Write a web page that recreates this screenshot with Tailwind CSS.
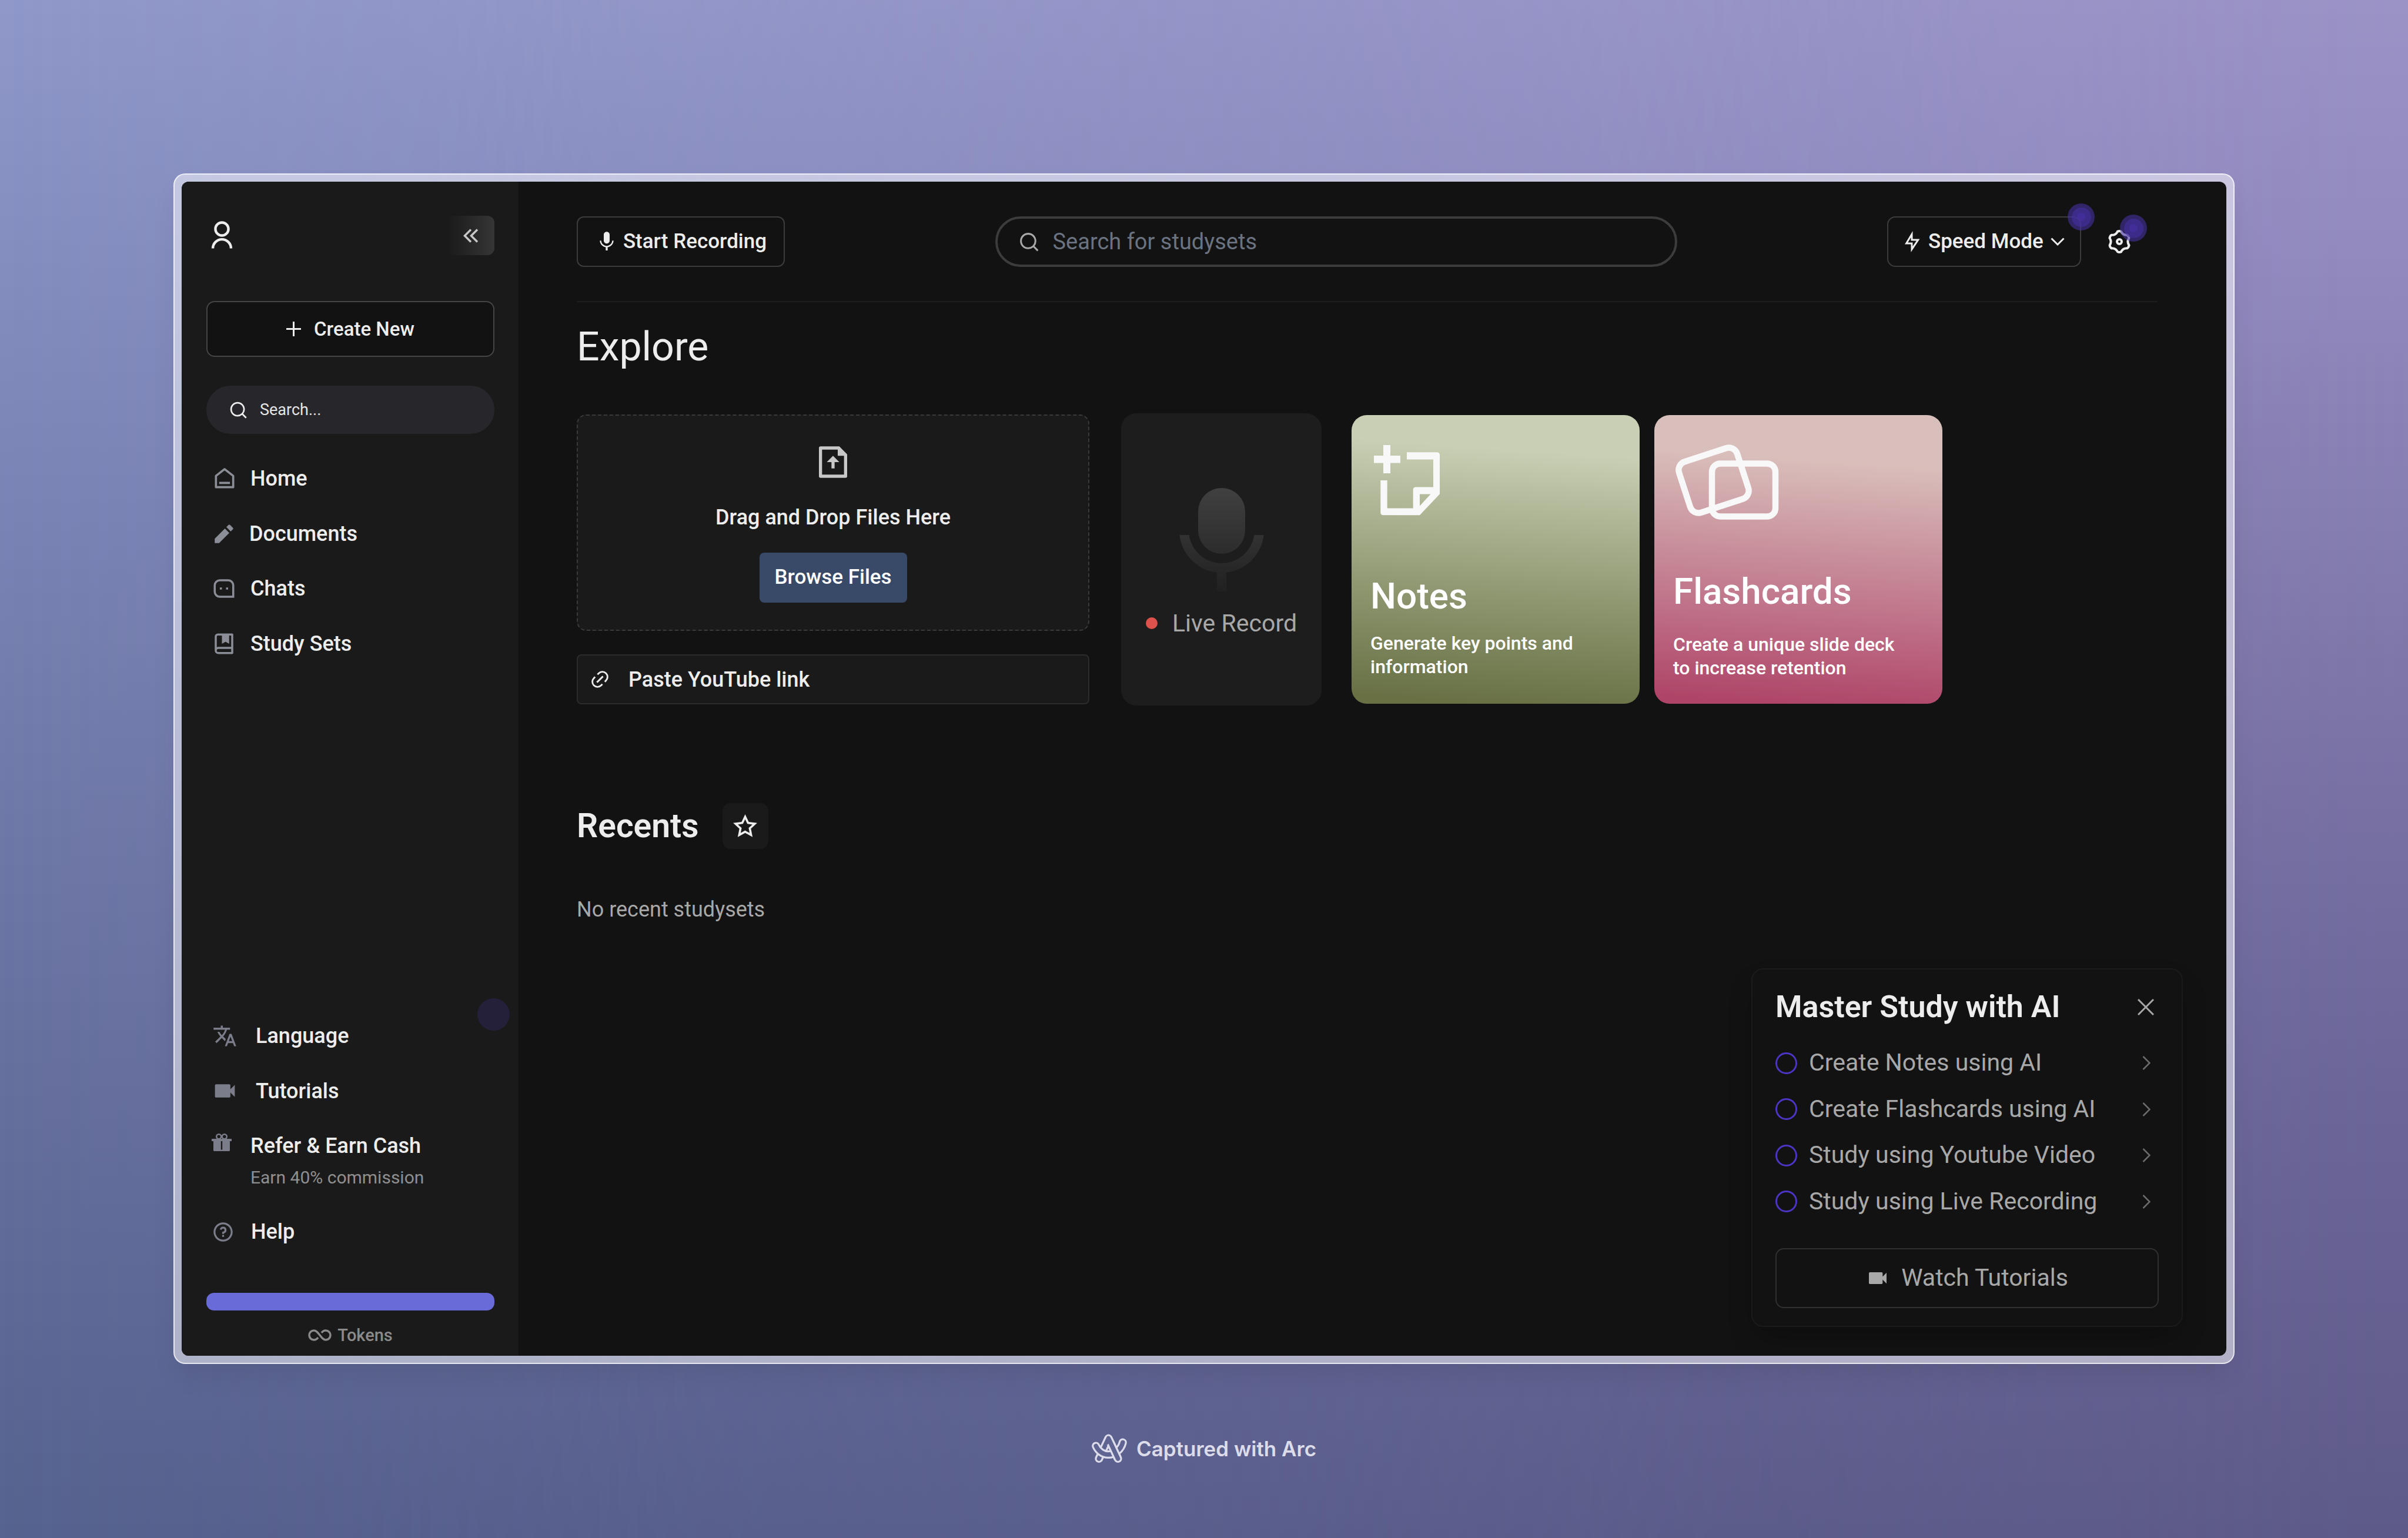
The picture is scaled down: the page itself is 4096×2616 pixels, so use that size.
<!DOCTYPE html>
<html lang="en">
<head>
<meta charset="utf-8">
<meta name="viewport" content="width=device-width, initial-scale=1">
<title>Explore</title>
<script src="https://cdn.jsdelivr.net/npm/@tailwindcss/browser@4"></script>
</head>
<body class="relative isolate flex min-h-screen flex-col bg-linear-[180deg,#8f98c9_0%,#7b86b7_30%,#67719f_68%,#56628f_100%] font-['Roboto',sans-serif] text-[#ededed]">
  <div class="absolute inset-0 -z-10 bg-linear-[180deg,#9b92c6_0%,#938abf_16%,#8077a9_42%,#6f699c_65%,#5e5a88_100%] [mask-image:linear-gradient(to_right,transparent,black)]"></div>

  <div class="flex flex-1 px-[295px] pt-[295px]">
    <div class="flex flex-1 rounded-[20px] border-2 border-white/70 bg-white/50 p-3 shadow-2xl shadow-black/10">
      <div class="flex flex-1 overflow-hidden rounded-xl bg-[#121212]">

        <!-- Sidebar -->
        <aside class="flex w-[573px] flex-none flex-col bg-[#1a1a1a] pt-[58px] pr-[41px] pb-[15px] pl-[42px]">
          <div class="flex h-[67px] items-center justify-between">
            <a href="#" aria-label="Profile">
              <svg class="size-[53px]" viewBox="0 0 24 24" fill="currentColor"><path d="M4 22a8 8 0 1 1 16 0h-2a6 6 0 1 0-12 0H4zm8-9c-3.315 0-6-2.685-6-6s2.685-6 6-6 6 2.685 6 6-2.685 6-6 6zm0-2c2.210 0 4-1.790 4-4s-1.790-4-4-4-4 1.790-4 4 1.790 4 4 4z"/></svg>
            </a>
            <button type="button" aria-label="Collapse sidebar" class="flex h-[67px] w-[80px] items-center justify-center rounded-xl bg-linear-to-r from-[#1a1a1a] to-[#363636] text-[#c8c8c8]">
              <svg class="h-6 w-[26px]" viewBox="0 0 26 24" fill="none" stroke="currentColor" stroke-width="3.500"><path d="M13 1.500 2.500 12 13 22.500M24 1.500 13.500 12 24 22.500"/></svg>
            </button>
          </div>

          <button type="button" class="mt-[78px] flex h-[95px] items-center justify-center gap-[22px] rounded-[14px] border-2 border-[#454545] bg-[#121212] text-[33px] font-medium">
            <svg class="size-[25px]" viewBox="0 0 25 25" stroke="currentColor" stroke-width="3"><path d="M12.500 0v25M0 12.500h25"/></svg>
            Create New
          </button>

          <label class="mt-[49px] flex h-[82px] items-center gap-5 rounded-full bg-[#27262b] px-[38px]">
            <svg class="size-[33px] flex-none" viewBox="0 0 24 24" fill="currentColor"><path d="M18.031 16.617l4.283 4.282-1.415 1.415-4.282-4.283A8.960 8.960 0 0 1 11 20c-4.968 0-9-4.032-9-9s4.032-9 9-9 9 4.032 9 9a8.960 8.960 0 0 1-1.969 5.617zm-2.006-.742A6.977 6.977 0 0 0 18 11c0-3.868-3.133-7-7-7-3.868 0-7 3.132-7 7 0 3.867 3.132 7 7 7a6.977 6.977 0 0 0 4.875-1.975l.15-.15z"/></svg>
            <input type="text" aria-label="Search" placeholder="Search..." class="w-full min-w-0 bg-transparent text-[27px] outline-none placeholder:text-[#e4e4e4]">
          </label>

          <nav class="mt-[29px] flex flex-col pl-[9px] text-[36px] font-medium">
            <a href="#" class="flex h-[94px] items-center gap-[22px]">
              <svg class="size-[44px] text-[#8b8e97]" viewBox="0 0 24 24" fill="currentColor"><path d="M21 20a1 1 0 0 1-1 1H4a1 1 0 0 1-1-1V9.490a1 1 0 0 1 .386-.79l8-6.222a1 1 0 0 1 1.228 0l8 6.222a1 1 0 0 1 .386.79V20zm-2-1V9.978l-7-5.444-7 5.444V19h14zM7 15h10v2H7v-2z"/></svg>
              Home
            </a>
            <a href="#" class="flex h-[93px] items-center gap-[22px]">
              <svg class="size-[42px] text-[#8b8e97]" viewBox="0 0 24 24" fill="currentColor"><path d="M12.900 6.855l4.242 4.242-9.900 9.900H3v-4.243l9.900-9.900zm1.414-1.415l2.121-2.121a1 1 0 0 1 1.414 0l2.829 2.828a1 1 0 0 1 0 1.415l-2.122 2.121-4.242-4.243z"/></svg>
              Documents
            </a>
            <a href="#" class="flex h-[94px] items-center gap-6">
              <svg class="size-[42px] text-[#8b8e97]" viewBox="0 0 24 24" fill="currentColor"><path d="M2 8.994A5.990 5.990 0 0 1 8 3h8c3.313 0 6 2.695 6 5.994V21H8c-3.313 0-6-2.695-6-5.994V8.994zM20 19V8.994A4.004 4.004 0 0 0 16 5H8a3.990 3.990 0 0 0-4 3.994v6.012A4.004 4.004 0 0 0 8 19h12zm-6-8h2v2h-2v-2zm-6 0h2v2H8v-2z"/></svg>
              Chats
            </a>
            <a href="#" class="flex h-[94px] items-center gap-6">
              <svg class="size-[42px] text-[#8b8e97]" viewBox="0 0 24 24" fill="currentColor"><path d="M3 18.500V5a3 3 0 0 1 3-3h14a1 1 0 0 1 1 1v18a1 1 0 0 1-1 1H6.500A3.500 3.500 0 0 1 3 18.500zM19 20v-3H6.500a1.500 1.500 0 0 0 0 3H19zM10 4H6a1 1 0 0 0-1 1v10.337A3.486 3.486 0 0 1 6.500 15H19V4h-2v8l-3.500-2-3.500 2V4z"/></svg>
              Study Sets
            </a>
          </nav>

          <nav class="relative mt-auto flex flex-col pl-[9px] text-[36px] font-medium">
            <span class="absolute -top-[17px] -right-[26px] size-[55px] rounded-full bg-[#24203a]"></span>
            <a href="#" class="flex h-[94px] items-center gap-[30px]">
              <svg class="h-[42px] w-[45px] text-[#7b7e8a]" viewBox="0 0 24 24" fill="currentColor"><path d="M12.870 15.070l-2.540-2.510.03-.03c1.740-1.940 2.980-4.170 3.710-6.530H17V4h-7V2H8v2H1v1.990h11.170C11.500 7.920 10.440 9.750 9 11.350 8.070 10.320 7.300 9.190 6.690 8h-2c.73 1.630 1.730 3.170 2.980 4.560l-5.090 5.020L4 19l5-5 3.110 3.110.76-2.040zM18.500 10h-2L12 22h2l1.120-3h4.750L21 22h2l-4.500-12zm-2.620 7l1.620-4.330L19.120 17h-3.240z"/></svg>
              Language
            </a>
            <a href="#" class="flex h-[93px] items-center gap-[30px]">
              <svg class="size-[45px] text-[#7b7e8a]" viewBox="0 0 24 24" fill="currentColor"><path d="M17 10.500V7c0-.55-.45-1-1-1H4c-.55 0-1 .45-1 1v10c0 .55.45 1 1 1h12c.55 0 1-.45 1-1v-3.500l4 4v-11l-4 4z"/></svg>
              Tutorials
            </a>
            <a href="#" class="flex h-[146px] items-start gap-8 pt-[26px]">
              <svg class="h-[30px] w-[34px] text-[#7b7e8a]" viewBox="0 0 34 30" fill="currentColor"><g fill="none" stroke="currentColor" stroke-width="2.500"><circle cx="12.200" cy="5.300" r="4"/><circle cx="21.800" cy="5.300" r="4"/></g><path fill-rule="evenodd" d="M0 9h34v4h-3v15.500a1.500 1.500 0 0 1-1.500 1.500h-25A1.500 1.500 0 0 1 3 28.500V13H0V9zm15.800 4v14.500h2.400V13h-2.400z"/></svg>
              <span class="flex flex-col leading-[42px]">
                Refer &amp; Earn Cash
                <span class="mt-[14px] text-[30px] leading-[38px] font-normal text-[#8f8f8f]">Earn 40% commission</span>
              </span>
            </a>
            <a href="#" class="flex h-[94px] items-center gap-7">
              <svg class="size-[39px] text-[#7b7e8a]" viewBox="0 0 24 24" fill="currentColor"><path d="M12 22C6.477 22 2 17.523 2 12S6.477 2 12 2s10 4.477 10 10-4.477 10-10 10zm0-2a8 8 0 1 0 0-16 8 8 0 0 0 0 16zm-1-5h2v2h-2v-2zm2-1.645V14h-2v-1.500a1 1 0 0 1 1-1 1.500 1.500 0 1 0-1.471-1.794l-1.962-.393A3.501 3.501 0 1 1 13 13.355z"/></svg>
              Help
            </a>
          </nav>

          <div role="progressbar" aria-label="Tokens" class="mt-[57px] h-[30px] rounded-[13px] bg-[#696bd9]"></div>
          <p class="mt-[22px] flex items-center justify-center gap-[10px] text-[29px] leading-10 font-medium text-[#8a8a8a]">
            <svg class="h-5 w-10" viewBox="0 0 40 20" fill="none" stroke="currentColor" stroke-width="3.500"><path d="M17 14C15 17 12.500 18 10 18A8 8 0 0 1 10 2C18 2 22 18 30 18A8 8 0 0 0 30 2C27.500 2 25 3 23 6"/></svg>
            Tokens
          </p>
        </aside>

        <!-- Main pane -->
        <main class="relative flex min-w-0 flex-1 flex-col pt-[59px] pr-[117px] pl-[99px]">
          <header class="flex items-center justify-between border-b-2 border-[#1d1d1d] pb-[58px]">
            <button type="button" class="flex h-[86px] w-[354px] items-center justify-center gap-2 rounded-xl border-2 border-[#3c3c3c] text-[35px] font-medium">
              <svg class="size-10" viewBox="0 0 24 24" fill="currentColor"><path d="M12 14c1.660 0 2.990-1.340 2.990-3L15 5c0-1.660-1.340-3-3-3S9 3.340 9 5v6c0 1.660 1.340 3 3 3zm5.600-3c0 3-2.700 5.300-5.600 5.300S6.400 14 6.400 11H5c0 3.410 2.720 6.230 6 6.720V21h2v-3.280c3.280-.48 6-3.300 6-6.720h-1.400z"/></svg>
              Start Recording
            </button>
            <label class="flex h-[86px] w-[1160px] items-center gap-[22px] rounded-full border-4 border-[#3c3c3c] px-[35px]">
              <svg class="size-[37px] flex-none text-[#a8a8a8]" viewBox="0 0 24 24" fill="currentColor"><path d="M18.031 16.617l4.283 4.282-1.415 1.415-4.282-4.283A8.960 8.960 0 0 1 11 20c-4.968 0-9-4.032-9-9s4.032-9 9-9 9 4.032 9 9a8.960 8.960 0 0 1-1.969 5.617zm-2.006-.742A6.977 6.977 0 0 0 18 11c0-3.868-3.133-7-7-7-3.868 0-7 3.132-7 7 0 3.867 3.132 7 7 7a6.977 6.977 0 0 0 4.875-1.975l.15-.15z"/></svg>
              <input type="text" aria-label="Search for studysets" placeholder="Search for studysets" class="w-full min-w-0 bg-transparent text-[38px] outline-none placeholder:text-[#6b7280]">
            </label>
            <div class="flex items-center gap-11 pr-11">
              <div class="relative">
                <label class="flex h-[86px] w-[330px] items-center rounded-[14px] border-2 border-[#3c3c3c] pl-[22px]">
                  <svg class="size-9 flex-none" viewBox="0 0 24 24" fill="currentColor"><path d="M13 9h8L11 24v-9H4l9-15v9zm-2 2V7.220L7.532 13H13v4.394L17.263 11H11z"/></svg>
                  <select aria-label="Mode" class="ml-[10px] appearance-none bg-transparent text-[35px] font-medium outline-none"><option>Speed Mode</option></select>
                  <svg class="ml-3 h-[15px] w-6 flex-none" viewBox="0 0 24 15" fill="none" stroke="currentColor" stroke-width="3"><path d="M1.500 1.500 12 12 22.500 1.500"/></svg>
                </label>
                <span class="absolute -top-[22px] -right-[23px] flex size-[46px] items-center justify-center rounded-full bg-[#4630a0]/60"><span class="flex size-[33px] items-center justify-center rounded-full bg-[#4630a0]/60"><span class="size-[14px] rounded-full bg-[#4630a0]/70"></span></span></span>
              </div>
              <button type="button" aria-label="Settings" class="relative">
                <svg class="size-[42px]" viewBox="-21 -21 42 42" fill="none" stroke="currentColor" stroke-width="4" stroke-linecap="round" stroke-linejoin="round">
                  <path d="M-3-17.200Q0-18.800 3-17.200Q6.200-10.800 13.400-11.200"/>
                  <path transform="rotate(60)" d="M-3-17.200Q0-18.800 3-17.200Q6.200-10.800 13.400-11.200"/>
                  <path transform="rotate(120)" d="M-3-17.200Q0-18.800 3-17.200Q6.200-10.800 13.400-11.200"/>
                  <path transform="rotate(180)" d="M-3-17.200Q0-18.800 3-17.200Q6.200-10.800 13.400-11.200"/>
                  <path transform="rotate(240)" d="M-3-17.200Q0-18.800 3-17.200Q6.200-10.800 13.400-11.200"/>
                  <path transform="rotate(300)" d="M-3-17.200Q0-18.800 3-17.200Q6.200-10.800 13.400-11.200"/>
                  <circle r="4"/>
                </svg>
                <span class="absolute -top-[25px] -right-[26px] flex size-[46px] items-center justify-center rounded-full bg-[#4630a0]/60"><span class="flex size-[33px] items-center justify-center rounded-full bg-[#4630a0]/60"><span class="size-[14px] rounded-full bg-[#4630a0]/70"></span></span></span>
              </button>
            </div>
          </header>

          <h1 class="mt-[38px] text-[68px] leading-[76px]">Explore</h1>

          <section class="mt-[75px] flex items-center">
            <div class="flex w-[872px] flex-col gap-10">
              <div class="flex h-[368px] flex-col items-center rounded-2xl border-2 border-dashed border-[#3a3a3a] bg-[#1a1a1a] pt-[47px]">
                <svg class="size-16 text-[#c8c8c8]" viewBox="0 0 24 24" fill="currentColor"><path d="M15 4H5v16h14V8h-4V4zM3 2.992C3 2.444 3.447 2 3.999 2H16l5 5v13.993A1 1 0 0 1 20.007 22H3.993A1 1 0 0 1 3 21.008V2.992zM13 12v4h-2v-4H8l4-4 4 4h-3z"/></svg>
                <p class="mt-10 text-[36px] leading-11 font-medium">Drag and Drop Files Here</p>
                <button type="button" class="mt-[38px] h-[85px] w-[251px] rounded-lg bg-[#394a69] text-[35px] font-medium text-white">Browse Files</button>
              </div>
              <label class="flex h-[85px] items-center gap-[31px] rounded-lg border-2 border-[#2c2c2c] bg-[#1a1a1a] px-5">
                <svg class="size-[35px] flex-none" viewBox="0 0 24 24" fill="currentColor"><path d="M18.364 15.536l-1.414-1.415 1.414-1.414a5 5 0 1 0-7.071-7.071L9.878 7.050 8.464 5.636l1.414-1.414a7 7 0 0 1 9.900 9.900l-1.414 1.414zm-2.829 2.828l-1.414 1.414a7 7 0 0 1-9.900-9.900l1.415-1.414L7.050 9.880l-1.414 1.413a5 5 0 1 0 7.071 7.071l1.414-1.414 1.414 1.414zm-.707-10.607l1.415 1.415-7.072 7.070-1.414-1.414 7.071-7.070z"/></svg>
                <input type="url" aria-label="YouTube link" placeholder="Paste YouTube link" class="w-full min-w-0 bg-transparent text-[36px] font-medium outline-none placeholder:text-[#ededed]">
              </label>
            </div>

            <a href="#" class="ml-[54px] flex h-[497px] w-[341px] flex-col items-center rounded-[26px] bg-[#1d1d1d] pt-[119px]">
              <svg class="size-[192px]" viewBox="0 0 24 24"><defs><linearGradient id="mic-fade" gradientUnits="userSpaceOnUse" x1="0" y1="1" x2="0" y2="23"><stop stop-color="#404040"/><stop offset="1" stop-color="#212121"/></linearGradient></defs><path fill="url(#mic-fade)" d="M12 1a5 5 0 0 1 5 5v4a5 5 0 0 1-10 0V6a5 5 0 0 1 5-5zM3.055 11H5.070a7.002 7.002 0 0 0 13.858 0h2.016A9.004 9.004 0 0 1 13 18.945V23h-2v-4.055A9.004 9.004 0 0 1 3.055 11z"/></svg>
              <p class="mt-[22px] flex items-center gap-[25px] text-[41px] leading-12 text-[#a8a8a8]"><span class="size-5 rounded-full bg-[#dd524c]"></span>Live Record</p>
            </a>

            <a href="#" class="ml-[51px] flex h-[491px] w-[490px] flex-col rounded-[26px] bg-linear-[184deg,#c8cfb4_14%,#9aa27e_52%,#687044_97%] pt-[51px] pr-[60px] pl-8 text-white">
              <svg class="ml-[6px] h-[120px] w-[113px] flex-none text-[#f8f8f8]" viewBox="0 0 113 120" fill="currentColor"><path d="M16 0h12v18h17v12.400H28V48H16V30.400H0V18h16z"/><path fill-rule="evenodd" d="M56 12.300h51q5 0 5 5v66L78 119.200H16q-4.700 0-4.700-4.700V60h11.400v47.500h44V76q0-4.600 4.600-4.600H101V24.500H56zM78 83.400v20l18.500-20z"/></svg>
              <h2 class="mt-[101px] text-[62px] leading-[72px] font-medium">Notes</h2>
              <p class="mt-6 text-[32px] leading-10 font-medium">Generate key points and information</p>
            </a>

            <a href="#" class="ml-[25px] flex h-[491px] w-[490px] flex-col rounded-[26px] bg-linear-[184deg,#d9bfbb_17%,#c78c99_50%,#bd6b85_72%,#ae4467_98%] pt-[49px] pr-[60px] pl-8 text-white">
              <svg class="ml-1 h-[129px] w-[176px] flex-none" viewBox="0 0 176 129" fill="none" stroke="#f8f8f8" stroke-width="10.500"><rect x="13" y="16.500" width="104" height="91" rx="15" transform="rotate(-18 65 62)"/><rect x="62" y="33.500" width="108" height="90" rx="14"/></svg>
              <h2 class="mt-[86px] text-[62px] leading-[72px] font-medium">Flashcards</h2>
              <p class="mt-[34px] text-[32px] leading-10 font-medium">Create a unique slide deck to increase retention</p>
            </a>
          </section>

          <div class="mt-[166px] flex items-center gap-10">
            <h2 class="text-[57px] leading-[64px] font-semibold">Recents</h2>
            <button type="button" aria-label="Favourites" class="flex size-[78px] items-center justify-center rounded-[14px] bg-[#1a1a1a]">
              <svg class="size-[43px]" viewBox="0 0 24 24" fill="currentColor"><path d="M12 18.260l-7.053 3.948 1.575-7.928L.588 8.792l8.027-.952L12 .5l3.386 7.340 8.027.952-5.934 5.488 1.575 7.928L12 18.260zm0-2.292l4.247 2.377-.948-4.773 3.573-3.305-4.833-.573L12 5.275l-2.038 4.420-4.833.572 3.573 3.305-.948 4.773L12 15.968z"/></svg>
            </button>
          </div>
          <p class="mt-[81px] text-[36px] leading-11 text-[#a8a8a8]">No recent studysets</p>

          <!-- Floating onboarding panel -->
          <section class="absolute right-[74px] bottom-[49px] flex w-[734px] flex-col rounded-[20px] border-2 border-[#1b1b1b] bg-[#121212] px-[39px] pt-[32px] pb-[30px] text-[41px] text-[#a8a8a8] shadow-2xl shadow-black/30">
            <div class="flex items-center justify-between pr-2">
              <h2 class="text-[52px] leading-16 font-semibold text-[#ededed]">Master Study with AI</h2>
              <button type="button" aria-label="Close"><svg class="size-[28px]" viewBox="0 0 28 28" stroke="currentColor" stroke-width="3"><path d="M1 1 27 27M27 1 1 27"/></svg></button>
            </div>
            <ul class="mt-6">
              <li><a href="#" class="flex h-[78px] items-center gap-5 pr-[14px]"><span class="size-[37px] rounded-full border-3 border-[#4a35c4]"></span><span class="flex-1">Create Notes using AI</span><svg class="h-6 w-[14px] text-[#6b6b6b]" viewBox="0 0 14 24" fill="none" stroke="currentColor" stroke-width="2.500"><path d="M1.500 1 12.500 12 1.500 23"/></svg></a></li>
              <li><a href="#" class="flex h-[79px] items-center gap-5 pr-[14px]"><span class="size-[37px] rounded-full border-3 border-[#4a35c4]"></span><span class="flex-1">Create Flashcards using AI</span><svg class="h-6 w-[14px] text-[#6b6b6b]" viewBox="0 0 14 24" fill="none" stroke="currentColor" stroke-width="2.500"><path d="M1.500 1 12.500 12 1.500 23"/></svg></a></li>
              <li><a href="#" class="flex h-[78px] items-center gap-5 pr-[14px]"><span class="size-[37px] rounded-full border-3 border-[#4a35c4]"></span><span class="flex-1">Study using Youtube Video</span><svg class="h-6 w-[14px] text-[#6b6b6b]" viewBox="0 0 14 24" fill="none" stroke="currentColor" stroke-width="2.500"><path d="M1.500 1 12.500 12 1.500 23"/></svg></a></li>
              <li><a href="#" class="flex h-[79px] items-center gap-5 pr-[14px]"><span class="size-[37px] rounded-full border-3 border-[#4a35c4]"></span><span class="flex-1">Study using Live Recording</span><svg class="h-6 w-[14px] text-[#6b6b6b]" viewBox="0 0 14 24" fill="none" stroke="currentColor" stroke-width="2.500"><path d="M1.500 1 12.500 12 1.500 23"/></svg></a></li>
            </ul>
            <button type="button" class="mt-10 flex h-[102px] items-center justify-center gap-5 rounded-[14px] border-2 border-[#303030]">
              <svg class="size-10" viewBox="0 0 24 24" fill="currentColor"><path d="M17 10.500V7c0-.55-.45-1-1-1H4c-.55 0-1 .45-1 1v10c0 .55.45 1 1 1h12c.55 0 1-.45 1-1v-3.500l4 4v-11l-4 4z"/></svg>
              Watch Tutorials
            </button>
          </section>
        </main>
      </div>
    </div>
  </div>

  <footer class="flex h-[296px] items-center justify-center gap-4 pb-2 font-['Inter',sans-serif] text-[35px] font-semibold text-[#dcdceb]">
    <svg class="h-[50px] w-[60px]" viewBox="0 0 60 50" fill="none" stroke="#dcdceb" stroke-width="14" stroke-linecap="round" stroke-linejoin="round">
      <path d="M12.400 42 28.500 7.500 44.600 42"/><path stroke="#5f6493" stroke-width="7.500" d="M12.400 42 28.500 7.500 44.600 42"/>
      <path d="M7.200 20.500C11 29 19 35 28 35C40 35 50 26 52.800 14.500"/><path stroke="#5f6493" stroke-width="7.500" d="M7.200 20.500C11 29 19 35 28 35C40 35 50 26 52.800 14.500"/>
      <g stroke-linecap="butt"><path d="M32.200 15.500 44 40.700"/><path stroke="#5f6493" stroke-width="7.500" d="M32 15 44.200 41.200"/></g>
    </svg>
    Captured with Arc
  </footer>
</body>
</html>
